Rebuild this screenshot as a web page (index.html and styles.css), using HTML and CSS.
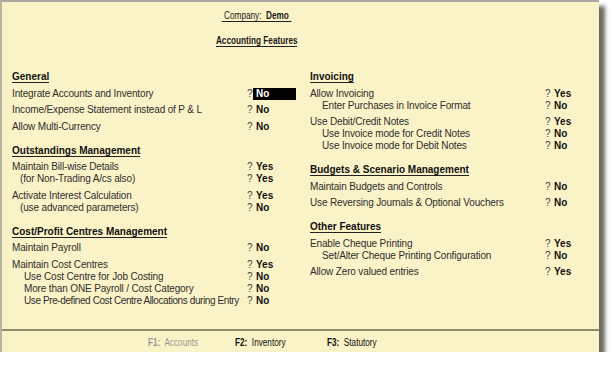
FILE: index.html
```html
<!DOCTYPE html>
<html lang="en">
    <head>
        <title>Accounting Features</title>
        <meta charset="utf-8">
        <link rel="stylesheet" href="styles.css">
    </head>
    <body>
        <div class="screen">
            <div class="head">
                <div class="title"><span class="company">Company:&nbsp; <b>Demo</b></span></div>
                <div class="subtitle"><span>Accounting Features</span></div>
            </div>
            <div class="columns">
                <!-- left column -->
                <div class="col">
                    <div class="sect">
                        <div class="sect-head"><span>General</span></div>
                        <div class="group">
                            <div class="row"><span class="label">Integrate Accounts and Inventory</span><span class="q">?</span><span class="val sel">No</span></div>
                        </div>
                        <div class="group">
                            <div class="row"><span class="label">Income/Expense Statement instead of P &amp; L</span><span class="q">?</span><span class="val">No</span></div>
                        </div>
                        <div class="group">
                            <div class="row"><span class="label">Allow Multi-Currency</span><span class="q">?</span><span class="val">No</span></div>
                        </div>
                    </div>
                    <div class="sect">
                        <div class="sect-head"><span>Outstandings Management</span></div>
                        <div class="group">
                            <div class="row"><span class="label">Maintain Bill-wise Details</span><span class="q">?</span><span class="val">Yes</span></div>
                            <div class="row"><span class="label paren">(for Non-Trading A/cs also)</span><span class="q">?</span><span class="val">Yes</span></div>
                        </div>
                        <div class="group">
                            <div class="row"><span class="label">Activate Interest Calculation</span><span class="q">?</span><span class="val">Yes</span></div>
                            <div class="row"><span class="label paren">(use advanced parameters)</span><span class="q">?</span><span class="val">No</span></div>
                        </div>
                    </div>
                    <div class="sect">
                        <div class="sect-head"><span>Cost/Profit Centres Management</span></div>
                        <div class="group">
                            <div class="row"><span class="label">Maintain Payroll</span><span class="q">?</span><span class="val">No</span></div>
                        </div>
                        <div class="group">
                            <div class="row"><span class="label">Maintain Cost Centres</span><span class="q">?</span><span class="val">Yes</span></div>
                            <div class="row"><span class="label sub">Use Cost Centre for Job Costing</span><span class="q">?</span><span class="val">No</span></div>
                            <div class="row"><span class="label sub">More than ONE Payroll / Cost Category</span><span class="q">?</span><span class="val">No</span></div>
                            <div class="row"><span class="label sub tight">Use Pre-defined Cost Centre Allocations during Entry</span><span class="q">?</span><span class="val">No</span></div>
                        </div>
                    </div>
                </div>
                <!-- right column -->
                <div class="col">
                    <div class="sect">
                        <div class="sect-head"><span>Invoicing</span></div>
                        <div class="group">
                            <div class="row"><span class="label">Allow Invoicing</span><span class="q">?</span><span class="val">Yes</span></div>
                            <div class="row"><span class="label sub">Enter Purchases in Invoice Format</span><span class="q">?</span><span class="val">No</span></div>
                        </div>
                        <div class="group">
                            <div class="row"><span class="label">Use Debit/Credit Notes</span><span class="q">?</span><span class="val">Yes</span></div>
                            <div class="row"><span class="label sub">Use Invoice mode for Credit Notes</span><span class="q">?</span><span class="val">No</span></div>
                            <div class="row"><span class="label sub">Use Invoice mode for Debit Notes</span><span class="q">?</span><span class="val">No</span></div>
                        </div>
                    </div>
                    <div class="sect">
                        <div class="sect-head"><span>Budgets &amp; Scenario Management</span></div>
                        <div class="group">
                            <div class="row"><span class="label">Maintain Budgets and Controls</span><span class="q">?</span><span class="val">No</span></div>
                        </div>
                        <div class="group">
                            <div class="row"><span class="label">Use Reversing Journals &amp; Optional Vouchers</span><span class="q">?</span><span class="val">No</span></div>
                        </div>
                    </div>
                    <div class="sect">
                        <div class="sect-head"><span>Other Features</span></div>
                        <div class="group">
                            <div class="row"><span class="label">Enable Cheque Printing</span><span class="q">?</span><span class="val">Yes</span></div>
                            <div class="row"><span class="label sub">Set/Alter Cheque Printing Configuration</span><span class="q">?</span><span class="val">No</span></div>
                        </div>
                        <div class="group">
                            <div class="row"><span class="label">Allow Zero valued entries</span><span class="q">?</span><span class="val">Yes</span></div>
                        </div>
                    </div>
                </div>
            </div>
            <div class="footer">
                <span class="fkey off"><span class="narrow"><b>F1:</b>&nbsp; Accounts</span></span>
                <span class="fkey"><span class="narrow"><b>F2:</b>&nbsp; Inventory</span></span>
                <span class="fkey"><span class="narrow"><b>F3:</b>&nbsp; Statutory</span></span>
            </div>
        </div>
    </body>
</html>
```

FILE: styles.css
```css
* {
    box-sizing: border-box;
}

body {
    margin: 0;
    background-color: white;
    font-family: 'Liberation Sans', Arial, sans-serif;
    font-size: 10px;
}

.screen {
    width: 599px;
    height: 352px;
    background-color: #fbf3c8;
    border-top: 2px solid #a9a8a0;
    border-left: 2px solid #b7b39c;
    box-shadow: 6px 6px 4px #6b6b66;
    display: flex;
    flex-direction: column;
}

/* heading (Tally uses a narrow face here) */
.head {
    padding-right: 88px;
    text-align: center;
    color: #1a1a1a;
}
.title {
    padding-top: 8px;
}
.company {
    display: inline-block;
    line-height: 11px;
    padding: 0 3px;
    border-bottom: 1px solid #222;
    transform: scaleX(0.82);
}
.subtitle {
    margin-top: 13px;
}
.subtitle span {
    display: inline-block;
    line-height: 11px;
    font-weight: bold;
    border-bottom: 1px solid #222;
    transform: scaleX(0.82);
}

/* columns */
.columns {
    flex: 1;
    display: grid;
    grid-template-columns: 298px 290px;
    padding-left: 10px;
    padding-top: 24px;
}
.sect + .sect {
    margin-top: 12px;
}
.sect-head {
    height: 12px;
    line-height: 12px;
    margin-bottom: 2px;
    font-weight: bold;
    color: #111;
}
.sect-head span {
    display: inline-block;
    line-height: 11px;
    border-bottom: 1px solid #222;
}
.group {
    margin-top: 4.5px;
}
.row {
    display: flex;
    height: 12px;
    line-height: 12px;
    color: #2e2e2e;
    letter-spacing: -0.15px;
}
.label {
    width: 235px;
    white-space: nowrap;
}
.label.paren {
    padding-left: 8px;
}
.label.sub {
    padding-left: 12px;
}
.label.tight {
    letter-spacing: -0.4px;
}
.q {
    width: 6px;
    color: #444;
}
.val {
    width: 43px;
    padding-left: 3px;
    font-weight: bold;
    color: #111;
    letter-spacing: 0;
}
.val.sel {
    background-color: #000;
    color: white;
}

/* bottom keys */
.footer {
    height: 23px;
    border-top: 2px solid #8e8b6c;
    padding-left: 146px;
    padding-top: 3px;
    line-height: 18px;
    display: flex;
    color: #111;
}
.fkey {
    width: 92px;
}
.fkey:first-child {
    width: 87px;
}
.fkey.off {
    color: #9a9a94;
}
.narrow {
    display: inline-block;
    white-space: nowrap;
    transform: scaleX(0.82);
    transform-origin: left center;
}
```
